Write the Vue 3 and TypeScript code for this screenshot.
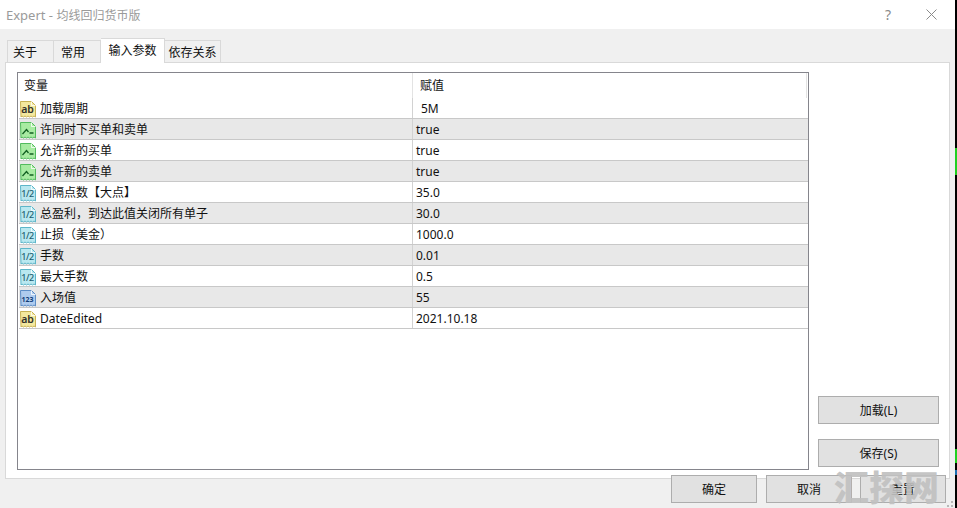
<script setup lang="ts">
type Kind = 'ab' | 'bool' | 'dbl' | 'int'
interface Row { name: string; value: string; kind: Kind }

const rows: Row[] = [
  { name: '加载周期', value: ' 5M', kind: 'ab' },
  { name: '许同时下买单和卖单', value: 'true', kind: 'bool' },
  { name: '允许新的买单', value: 'true', kind: 'bool' },
  { name: '允许新的卖单', value: 'true', kind: 'bool' },
  { name: '间隔点数【大点】', value: '35.0', kind: 'dbl' },
  { name: '总盈利，到达此值关闭所有单子', value: '30.0', kind: 'dbl' },
  { name: '止损（美金）', value: '1000.0', kind: 'dbl' },
  { name: '手数', value: '0.01', kind: 'dbl' },
  { name: '最大手数', value: '0.5', kind: 'dbl' },
  { name: '入场值', value: '55', kind: 'int' },
  { name: 'DateEdited', value: '2021.10.18', kind: 'ab' },
]
const tabs = ['关于', '常用', '输入参数', '依存关系']
const labels: Record<string, string> = { ab: 'ab', dbl: '1/2', int: '123' }
</script>

<template>
  <div class="screen">
    <div class="window">
      <header class="title">
        <span class="title-text"><span class="title-latin">Expert - </span>均线回归货币版</span>
        <span class="help">?</span>
        <svg class="close" width="11" height="11" viewBox="0 0 11 11">
          <path d="M.5.5l10 10M10.5.5l-10 10" stroke="#8a8a8a" fill="none" />
        </svg>
      </header>

      <nav class="tabs">
        <div v-for="(t, i) in tabs" :key="t" class="tab" :class="[`tab-${i}`, { active: i === 2 }]">{{ t }}</div>
      </nav>

      <section class="panel">
        <div class="table">
          <div class="head">
            <div class="cell-name head-name">变量</div>
            <div class="cell-value head-value">赋值</div>
            <div class="head-end"></div>
          </div>
          <div v-for="(r, i) in rows" :key="r.name" class="row" :class="{ odd: i % 2 === 1 }">
            <div class="cell-name">
              <svg class="icon" :class="`icon-${r.kind}`" width="16" height="17" viewBox="0 0 16 17">
                <path class="doc" d="M.5.5h11l4 4v11.500l-1.500-1-1.500 1-1.500-1-1.500 1-1.500-1-1.500 1-1.500-1-1.500 1-1.500-1-1 1z" />
                <path class="fold" d="M11.500.5v4h4" />
                <path v-if="r.kind === 'bool'" class="graph" d="M2.500 12l4-4.500 2 2.500M9.500 11h4" />
                <text v-else class="glyph" :class="`glyph-${r.kind}`" x="7.500" y="11.500">{{ labels[r.kind] }}</text>
              </svg>
              <span class="name">{{ r.name }}</span>
            </div>
            <div class="cell-value" :class="{ indented: r.value.startsWith(' ') }">{{ r.value.trim() }}</div>
          </div>
        </div>
        <aside class="side">
          <button class="btn side-btn">加载(L)</button>
          <button class="btn side-btn">保存(S)</button>
        </aside>
      </section>

      <footer class="footer">
        <button class="btn foot-btn">确定</button>
        <button class="btn foot-btn">取消</button>
        <button class="btn foot-btn">重置</button>
      </footer>

      <svg class="grip" width="6" height="6" viewBox="0 0 6 6">
        <path d="M4 0h2v2H4zM0 4h2v2H0zM4 4h2v2H4z" fill="#b8b8b8" />
      </svg>
      <div class="watermark">汇探网</div>
    </div>
    <div class="strip"></div>
  </div>
</template>

<style scoped>
.screen {
  display: flex;
  width: 957px;
  height: 508px;
  overflow: hidden;
  font-family: "Noto Sans", "Noto Sans CJK SC", sans-serif;
  font-size: 12px;
  color: #111;
}
.window {
  position: relative;
  flex: none;
  width: 955px;
  height: 508px;
  background: #f0f0f0;
}
.strip {
  flex: none;
  width: 2px;
  height: 508px;
  background: linear-gradient(#000 148px, #1fd01f 148px, #1fd01f 175px, #000 175px, #000 449px, #1fd01f 449px, #1fd01f 463px, #000 463px, #000 470px, #1c6fb0 470px, #1c6fb0 475px, #000 475px);
}
.title {
  display: flex;
  align-items: center;
  height: 29px;
  padding-left: 6px;
  background: #fff;
}
.title-text {
  flex: 1;
  color: #9a9a9a;
  font-size: 12px;
}
.title-latin {
  font-size: 13px;
}
.help {
  margin-right: 35px;
  color: #8a8a8a;
  font-size: 14px;
}
.close {
  margin-right: 18px;
}
.tabs {
  position: relative;
  z-index: 1;
  display: flex;
  align-items: flex-end;
  height: 25px;
  margin-top: 9px;
  margin-bottom: -1px;
  padding-left: 7px;
}
.tab {
  display: flex;
  align-items: center;
  justify-content: center;
  height: 22px;
  margin-bottom: 1px;
  background: #f0f0f0;
  border: 1px solid #d9d9d9;
  border-bottom: 0;
  box-sizing: border-box;
}
.tab + .tab {
  border-left: 0;
}
.tab-0, .tab-1 {
  width: 47px;
  justify-content: flex-start;
}
.tab-0 {
  padding-left: 5px;
}
.tab-1 {
  padding-left: 7px;
}
.tab-2 {
  width: 64px;
}
.tab-3 {
  width: 56px;
}
.tab.active {
  height: 25px;
  margin-bottom: 0;
  padding-bottom: 2px;
  background: #fff;
}
.panel {
  display: flex;
  box-sizing: border-box;
  width: 945px;
  height: 417px;
  margin-left: 5px;
  padding: 9px 10px 8px 11px;
  background: #fff;
  border: 1px solid #d9d9d9;
}
.table {
  box-sizing: border-box;
  width: 792px;
  height: 398px;
  padding: 0 0 0 1px;
  border: 1px solid #85858c;
}
.head {
  position: relative;
  display: flex;
  height: 25px;
  align-items: center;
}
.head-name {
  padding-left: 5px;
  padding-bottom: 2px;
}
.head-end {
  position: absolute;
  right: 1px;
  top: 0;
  width: 1px;
  height: 25px;
  background: #e3e3e3;
}
.row {
  display: flex;
  box-sizing: border-box;
  height: 21px;
  background: #fff;
  border-bottom: 1px solid #c8c8c8;
}
.row.odd {
  background: #e8e8e8;
}
.cell-name {
  display: flex;
  align-items: center;
  box-sizing: border-box;
  width: 393px;
  height: 100%;
}
.cell-value {
  display: flex;
  align-items: center;
  flex: 1;
  box-sizing: border-box;
  height: 100%;
  padding-left: 3px;
  border-left: 1px solid #d2d2d2;
}
.head-value {
  padding-left: 7px;
  padding-bottom: 2px;
  flex: none;
  width: 390px;
  border-left-color: #e3e3e3;
}
.cell-value.indented {
  padding-left: 8px;
}
.icon {
  flex: none;
  margin-left: 1px;
  margin-top: 2px;
}
.name {
  margin-left: 4px;
  white-space: nowrap;
}
.doc {
  stroke-width: 1;
}
.fold {
  fill: none;
  stroke: #fff;
  stroke-opacity: 0.8;
}
.icon-ab .doc {
  fill: #f4e89e;
  stroke: #c8b255;
}
.icon-bool .doc {
  fill: #a8eba2;
  stroke: #53bb5e;
}
.icon-dbl .doc {
  fill: #b9e8f0;
  stroke: #5db6c9;
}
.icon-int .doc {
  fill: #aecbee;
  stroke: #5c8dc6;
}
.graph {
  fill: none;
  stroke: #125f22;
  stroke-width: 1.300;
}
.glyph {
  text-anchor: middle;
  font-size: 10.500px;
  font-weight: 600;
  fill: #30302a;
}
.glyph-dbl {
  fill: #1d5f70;
  font-size: 9px;
  font-weight: 500;
  letter-spacing: -0.500px;
}
.glyph-int {
  fill: #123d78;
  font-size: 7px;
  font-weight: 700;
}
.side {
  display: flex;
  flex-direction: column;
  justify-content: flex-end;
  gap: 15px;
  margin-left: 9px;
  padding-bottom: 3px;
}
.btn {
  box-sizing: border-box;
  padding: 0;
  font: inherit;
  color: #111;
  background: #e1e1e1;
  border: 1px solid #adadad;
}
.side-btn {
  width: 121px;
  height: 28px;
}
.footer {
  position: relative;
  display: flex;
  justify-content: flex-end;
  gap: 9px;
  margin-top: -4px;
  padding-right: 9px;
}
.foot-btn {
  width: 86px;
  height: 28px;
}
.foot-btn:last-child {
  margin-left: -1px;
}
.grip {
  position: absolute;
  right: 2px;
  bottom: 1px;
}
.watermark {
  position: absolute;
  left: 834px;
  top: 464px;
  color: rgba(192, 192, 192, 0.92);
  font-family: "Noto Sans CJK SC", sans-serif;
  font-size: 35px;
  font-weight: 900;
  line-height: 43px;
  white-space: nowrap;
}
</style>
